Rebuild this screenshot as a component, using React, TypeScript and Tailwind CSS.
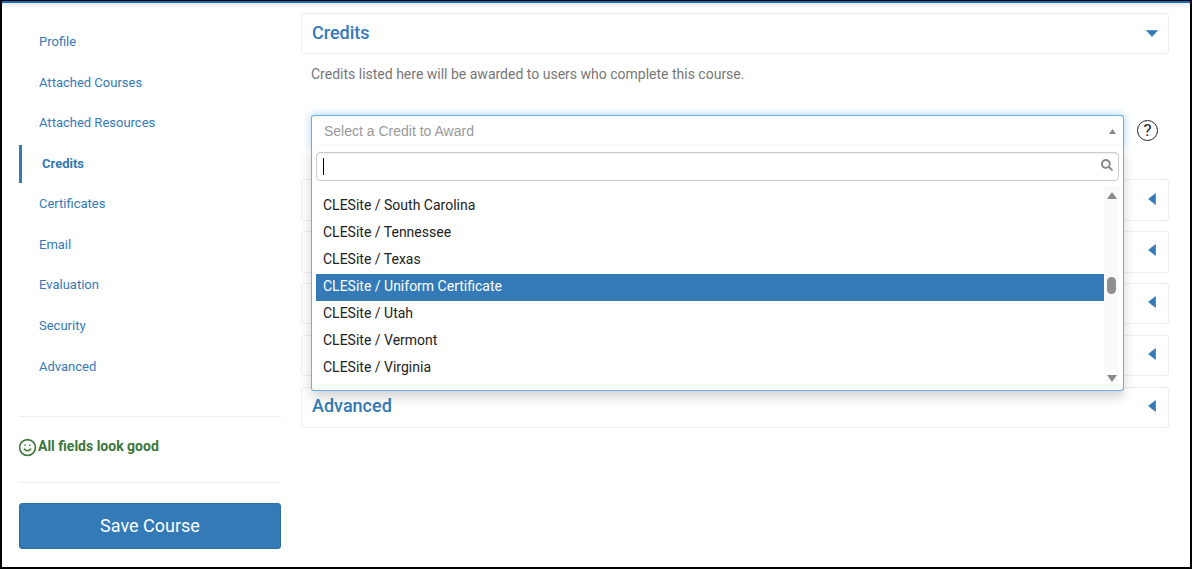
import { Smile } from 'lucide-react'
import { FaSearch } from 'react-icons/fa'

const NAV = [
  'Profile',
  'Attached Courses',
  'Attached Resources',
  'Credits',
  'Certificates',
  'Email',
  'Evaluation',
  'Security',
  'Advanced',
]

const OPTIONS = [
  'CLESite / South Carolina',
  'CLESite / Tennessee',
  'CLESite / Texas',
  'CLESite / Uniform Certificate',
  'CLESite / Utah',
  'CLESite / Vermont',
  'CLESite / Virginia',
]

function CaretLeft() {
  return (
    <svg width="8" height="12" viewBox="0 0 8 12" className="mb-[3px] shrink-0">
      <path d="M7.6 0.4v11.2L0.5 6z" fill="#337ab7" stroke="#337ab7" strokeWidth="0.6" strokeLinejoin="round" />
    </svg>
  )
}

function CaretDown() {
  return (
    <svg width="12" height="7" viewBox="0 0 12 7" className="shrink-0">
      <path d="M0.4 0.4h11.2L6 6.6z" fill="#337ab7" stroke="#337ab7" strokeWidth="0.6" strokeLinejoin="round" />
    </svg>
  )
}

function Panel({ title }: { title?: string }) {
  return (
    <div className="flex h-[41.4px] items-center justify-between rounded-[3px] border border-[#eeeeee] bg-white pl-[10px] pr-[12px]">
      <span className="pb-[4px] text-[18px] font-medium text-[#337ab7]">{title}</span>
      <CaretLeft />
    </div>
  )
}

function Dropdown() {
  return (
    <div className="absolute left-[-1px] right-[-1px] top-[30px] h-[245px] rounded-b-[3px] border border-t-0 border-[#66afe9] bg-white px-1 pt-[6px] shadow-[0_6px_12px_rgba(0,0,0,0.175)]">
      <div className="flex h-[29px] items-center justify-between rounded-[4px] border border-[#cccccc] pl-[6px] pr-[5px] shadow-[inset_0_1px_1px_rgba(0,0,0,0.075)]">
        <span className="h-[17px] w-px bg-black" />
        <FaSearch size={12} color="#8a8a8a" className="mb-[2px]" />
      </div>
      <div className="mt-[5px] flex h-[200px]">
        <ul className="w-[788px] pt-[7px]">
          {OPTIONS.map((o) => (
            <li
              key={o}
              className={`flex h-[27px] items-center pb-[2px] pl-[7px] text-[14px] ${
                o.includes('Uniform') ? 'bg-[#337ab7] text-white' : 'text-[#222222]'
              }`}
            >
              {o}
            </li>
          ))}
        </ul>
        <div className="flex w-[15px] flex-col items-center bg-[#fafafa] pt-[6px]">
          <svg width="10" height="7" viewBox="0 0 10 7" className="shrink-0">
            <path d="M5 0l5 7H0z" fill="#8a8a8a" />
          </svg>
          <div className="mt-[78px] h-[17px] w-[9px] rounded-[5px] bg-[#8f8f8f]" />
          <svg width="10" height="7" viewBox="0 0 10 7" className="mt-[81px] shrink-0">
            <path d="M0 0h10L5 7z" fill="#8a8a8a" />
          </svg>
        </div>
      </div>
    </div>
  )
}

export default function App() {
  return (
    <div
      className="relative flex h-[569px] w-[1192px] overflow-hidden border-x-2 border-b-2 border-t border-black bg-white text-[14px]"
      style={{ fontFamily: 'Roboto, sans-serif' }}
    >
      {/* top bar of the host page, with its soft shadow */}
      <div className="absolute inset-x-0 top-0 h-[8px] border-t-2 border-[#1b6cb5] bg-gradient-to-b from-[#e6e9ee] to-white" />

      <aside className="relative ml-[17px] flex w-[262px] shrink-0 flex-col pt-[19.4px]">
        <nav className="flex flex-col">
          {NAV.map((n) => {
            const active = n === 'Credits'
            return (
              <a key={n} className="flex h-[40.55px] items-end text-[13px] text-[#337ab7]">
                <span
                  className={`flex h-[38px] items-center pl-5 ${
                    active ? 'border-l-[3px] border-[#337ab7] font-bold' : ''
                  }`}
                >
                  {n}
                </span>
              </a>
            )
          })}
        </nav>
        <div className="mt-[31.05px] flex h-[67px] items-center gap-[1px] border-y border-[#eeeeee] pb-[6px] text-[#3c763d]">
          <Smile size={19} strokeWidth={2} className="ml-[-1px] mt-[1px] shrink-0" />
          <span className="font-bold">All fields look good</span>
        </div>
        <button className="mt-5 h-[46px] rounded-[3px] border border-[#2e6da4] bg-[#337ab7] pb-[2px] text-[18px] text-white">
          Save Course
        </button>
      </aside>

      <main className="relative ml-5 w-[868px] shrink-0 pt-[12px]">
        <div className="flex h-[41.4px] items-center justify-between rounded-[3px] border border-[#eeeeee] pl-[10px] pr-[10px]">
          <span className="pb-[3px] text-[18px] font-medium text-[#337ab7]">Credits</span>
          <CaretDown />
        </div>
        <p className="h-[60.6px] pl-[10px] pt-[10px] leading-5 text-[#777777]">
          Credits listed here will be awarded to users who complete this course.
        </p>
        <div className="relative z-10 ml-[10px] flex h-[32px] items-center">
          <div className="relative h-[32px] w-[813px] rounded-t-[3px] border border-b-0 border-[#66afe9] bg-white shadow-[0_0_8px_rgba(102,175,233,0.6)]">
            <div
              className="flex h-[30px] items-center justify-between pl-3 pr-[7px] pt-[1px] text-[#999999]"
              style={{ fontFamily: '"Liberation Sans", sans-serif' }}
            >
              <span>Select a Credit to Award</span>
              <svg width="7" height="5" viewBox="0 0 7 5">
                <path d="M3.5 0L7 5H0z" fill="#888888" />
              </svg>
            </div>
            <Dropdown />
          </div>
          <span className="ml-[13px] flex h-[21px] w-[21px] items-center justify-center rounded-full border-[1.5px] border-[#222222] text-[17px] text-[#222222]">
            ?
          </span>
        </div>
        <div className="mt-[32.4px] flex flex-col gap-[10.4px]">
          <Panel />
          <Panel />
          <Panel />
          <Panel />
          <Panel title="Advanced" />
        </div>
      </main>
    </div>
  )
}
